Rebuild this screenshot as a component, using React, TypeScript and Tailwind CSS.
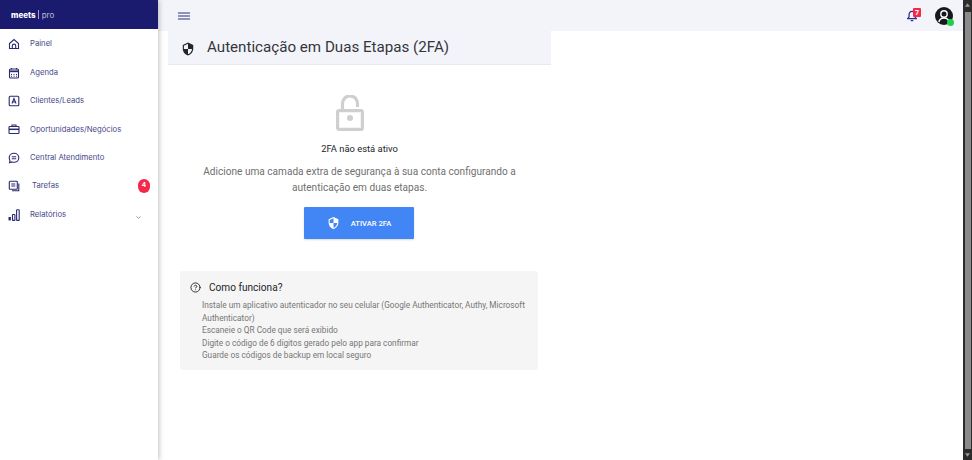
import { ChevronDown, CircleHelp } from "lucide-react";
import type { ReactNode } from "react";

function Glyph({ children }: { children: ReactNode }) {
  return (
    <svg viewBox="0 0 12 12" className="w-[12px] h-[12px] text-[#2b2b72]" fill="none" stroke="currentColor" strokeWidth="1.1">
      {children}
    </svg>
  );
}

const navItems: { label: string; icon: ReactNode }[] = [
  {
    label: "Painel",
    icon: (
      <Glyph>
        <path d="M1.500 5.500 6 1.500l4.500 4v5h-9z" />
        <path d="M4.300 10.500V7.800a1.700 1.700 0 0 1 3.400 0v2.700" />
      </Glyph>
    ),
  },
  {
    label: "Agenda",
    icon: (
      <Glyph>
        <rect x="1.500" y="2" width="9" height="9" rx="1" />
        <path d="M1.500 4.300h9" strokeWidth="1.800" />
        <path d="M3.500 1v1.500M8.500 1v1.500" />
        <path d="M3 7.500h1M5.500 7.500h1M8 7.500h1M3 9.300h1M5.500 9.300h1M8 9.300h1" />
      </Glyph>
    ),
  },
  {
    label: "Clientes/Leads",
    icon: (
      <Glyph>
        <rect x="1.200" y="1.200" width="9.600" height="9.600" rx="1" />
        <path d="M4 8.500 6 3.500l2 5M4.700 7h2.600" />
      </Glyph>
    ),
  },
  {
    label: "Oportunidades/Negócios",
    icon: (
      <Glyph>
        <rect x="1" y="3.500" width="10" height="7" rx="0.800" />
        <path d="M4 3.500V2h4v1.500" />
        <path d="M1 6.300h10" strokeWidth="1.500" />
      </Glyph>
    ),
  },
  {
    label: "Central Atendimento",
    icon: (
      <Glyph>
        <path d="M6 1.300c2.800 0 4.800 2 4.800 4.500S8.800 10.300 6 10.300c-.8 0-1.500-.1-2.200-.4l-2.300.8.500-2.200C1.500 7.700 1.200 6.800 1.200 5.800 1.200 3.300 3.200 1.300 6 1.300z" />
        <path d="M3.800 4.700h4.400M3.800 6.800h4.400" />
      </Glyph>
    ),
  },
];

const steps = [
  "Instale um aplicativo autenticador no seu celular (Google Authenticator, Authy, Microsoft Authenticator)",
  "Escaneie o QR Code que será exibido",
  "Digite o código de 6 dígitos gerado pelo app para confirmar",
  "Guarde os códigos de backup em local seguro",
];

function ShieldIcon({ className }: { className?: string }) {
  return (
    <svg viewBox="0 0 24 24" className={className} fill="currentColor">
      <path d="M12 1 3 5v6c0 5.550 3.840 10.740 9 12 5.160-1.260 9-6.450 9-12V5l-9-4zm0 10.990h7c-.53 4.120-3.280 7.790-7 8.940V12H5V6.300l7-3.110v8.800z" />
    </svg>
  );
}

function Sidebar() {
  return (
    <aside className="w-[158px] shrink-0 bg-white shadow-[1px_0_5px_rgba(0,0,0,0.25)] z-10 font-['Inter',sans-serif] text-[7.7px] text-[#47478a]">
      <div className="h-[29px] bg-[#1a1a6e] flex items-center pl-[11px] text-white">
        <span className="text-[8px] font-extrabold leading-none">meets</span>
        <span className="mx-[2.500px] h-[9px] w-px bg-white/60" />
        <span className="text-[8px] text-white/70 leading-none">pro</span>
      </div>
      <nav className="flex flex-col pt-[1px]">
        {navItems.map((item) => (
          <div key={item.label} className="h-[28.400px] flex items-center pl-[8px] gap-[10px]">
            {item.icon}
            <span>{item.label}</span>
          </div>
        ))}
        <div className="h-[28.400px] flex items-center pl-[8px] gap-[12px]">
          <Glyph>
            <rect x="1.300" y="1.300" width="8" height="8" rx="0.800" />
            <path d="M3.300 4h4M3.300 6h4" />
            <path d="M10.800 3.500v7.300H4" />
          </Glyph>
          <span>Tarefas</span>
          <span className="ml-auto mr-[8px] w-[12px] h-[14px] rounded-full bg-[#f5284a] text-white text-[6.500px] font-bold flex items-center justify-center">4</span>
        </div>
        <div className="h-[28.400px] flex items-center pl-[8px] gap-[10px] relative">
          <Glyph>
            <rect x="0.500" y="8" width="2.400" height="3.400" fill="currentColor" stroke="none" />
            <rect x="4.500" y="5.500" width="2.400" height="5.900" rx="0.500" />
            <rect x="8.600" y="0.800" width="2.600" height="10.600" rx="0.500" />
          </Glyph>
          <span>Relatórios</span>
          <ChevronDown className="absolute left-[135px] top-[14px] w-[7px] h-[7px]" strokeWidth={2} />
        </div>
      </nav>
    </aside>
  );
}

function Topbar() {
  return (
    <header className="h-[31px] bg-[#f3f4f9] flex items-center pl-[20px] pr-[10px] shrink-0">
      <svg viewBox="0 0 12 8" className="w-[12px] h-[8px] text-[#2f2f80]" fill="none" stroke="currentColor" strokeWidth="1.100">
        <path d="M0 1h12M0 4h12M0 7h12" />
      </svg>
      <div className="ml-auto flex items-center">
        <div className="relative w-[14px] h-[14px] mr-[14px]">
          <svg viewBox="0 0 12 14" className="absolute left-0 top-[1px] w-[10px] h-[12px] text-[#2a2aa0]" fill="none" stroke="currentColor" strokeWidth="1.500">
            <path d="M6 1.500c-2.300 0-3.500 1.800-3.500 4v2.500L1 10h10L9.500 8V5.500c0-2.200-1.200-4-3.500-4z" />
            <path d="M4.500 12.500h3" />
          </svg>
          <span className="absolute -top-[1px] left-[6px] w-[8px] h-[9px] rounded-[1px] bg-[#f5284a] text-white text-[7px] font-bold leading-[9px] text-center">7</span>
        </div>
        <div className="relative w-[18px] h-[18px] rounded-full bg-[#17171c]">
          <svg viewBox="0 0 18 18" className="w-[18px] h-[18px]" fill="none" stroke="white" strokeWidth="1.400">
            <circle cx="9" cy="7" r="3.200" />
            <path d="M3.800 15c.8-2.800 2.600-4 5.200-4s4.400 1.200 5.200 4" />
          </svg>
          <span className="absolute right-[-1px] bottom-[-1px] w-[7px] h-[7px] rounded-full bg-[#1fd14a]" />
        </div>
      </div>
    </header>
  );
}

function TwoFactorCard() {
  return (
    <section className="w-[383px] ml-[10px] font-['Roboto',sans-serif]">
      <div className="h-[34px] bg-[#f3f4f9] border-b border-[#e8e9ee] flex items-center pl-[13px]">
        <ShieldIcon className="w-[14px] h-[14px] mt-[2px] text-[#212529]" />
        <h1 className="ml-[12px] text-[15.150px] leading-none text-[#33363b]">Autenticação em Duas Etapas (2FA)</h1>
      </div>
      <div className="flex flex-col items-center pt-[30px] px-[12px]">
        <svg viewBox="0 0 28 36" className="w-[28px] h-[36px] ml-[-20px] text-[#cfcfcf]" fill="none" stroke="currentColor" strokeWidth="3.200">
          <rect x="1.600" y="15.600" width="24.800" height="18.800" rx="1.500" />
          <path d="M6.500 15V8.500a7.500 7.500 0 0 1 15 0V12" />
          <circle cx="14" cy="23" r="3" fill="currentColor" stroke="none" />
        </svg>
        <p className="mt-[11px] text-[9.400px] leading-[14px] text-[#212529]">2FA não está ativo</p>
        <p className="mt-[8px] w-[340px] text-center text-[10.100px] leading-[15.700px] text-[#707070]">
          Adicione uma camada extra de segurança à sua conta configurando a autenticação em duas etapas.
        </p>
        <button className="mt-[12px] ml-[-1px] w-[110px] h-[32px] bg-[#4285f4] rounded-[1px] flex items-center justify-center gap-[11px] text-white text-[7.600px] font-medium shadow-[0_1px_2px_rgba(0,0,0,0.15)]">
          <ShieldIcon className="w-[13px] h-[14px] text-white" />
          ATIVAR 2FA
        </button>
        <div className="mt-[32px] w-[358px] h-[99px] self-start bg-[#f5f5f5] rounded-[3px] pl-[10px] pr-[8px] pt-[10px]">
          <div className="flex items-center text-[#212529]">
            <CircleHelp className="w-[11px] h-[11px]" strokeWidth={2} />
            <span className="ml-[8px] text-[10.100px] leading-[13px]">Como funciona?</span>
          </div>
          <ul className="mt-[5px] pl-[12px] text-[8.250px] leading-[12.400px] text-[#757575]">
            {steps.map((step) => (
              <li key={step}>{step}</li>
            ))}
          </ul>
        </div>
      </div>
    </section>
  );
}

function Scrollbar() {
  return (
    <div className="w-[9px] shrink-0 bg-[#2c2c2c] flex flex-col items-center pt-[3px] pb-[3px]">
      <svg viewBox="0 0 6 4" className="w-[5px] h-[4px] text-[#9a9a9a]" fill="currentColor">
        <path d="M3 0 6 4H0z" />
      </svg>
      <div className="w-[6px] h-[437px] mt-[5px] bg-[#8a8a8a]" />
      <svg viewBox="0 0 6 4" className="w-[5px] h-[4px] mt-auto text-[#9a9a9a]" fill="currentColor">
        <path d="M0 0h6L3 4z" />
      </svg>
    </div>
  );
}

export default function App() {
  return (
    <div className="h-[460px] w-[972px] flex overflow-hidden bg-white">
      <Sidebar />
      <main className="flex-1 flex flex-col min-w-0">
        <Topbar />
        <TwoFactorCard />
      </main>
      <Scrollbar />
    </div>
  );
}
